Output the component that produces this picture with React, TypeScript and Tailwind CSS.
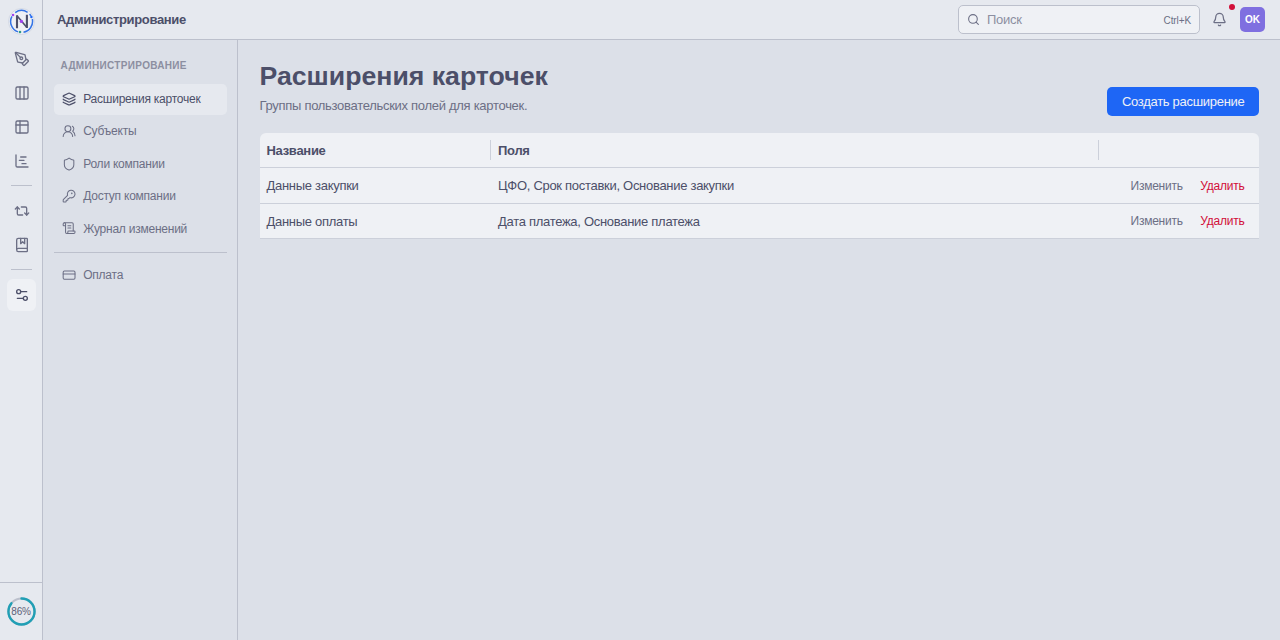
import React from 'react';
import {
  Bell,
  BookMarked,
  ChartGantt,
  Columns3,
  CreditCard,
  KeyRound,
  Layers,
  PenTool,
  Repeat2,
  ScrollText,
  Search,
  Settings2,
  Shield,
  UsersRound,
  type LucideIcon,
} from 'lucide-react';

interface IExtension {
  id: number;
  name: string;
  fields: string[];
}

interface IMenuItem {
  label: string;
  icon: LucideIcon;
  active?: boolean;
}

const extensions: IExtension[] = [
  { id: 1, name: 'Данные закупки', fields: ['ЦФО', 'Срок поставки', 'Основание закупки'] },
  { id: 2, name: 'Данные оплаты', fields: ['Дата платежа', 'Основание платежа'] },
];

const menuItems: IMenuItem[] = [
  { label: 'Расширения карточек', icon: Layers, active: true },
  { label: 'Субъекты', icon: UsersRound },
  { label: 'Роли компании', icon: Shield },
  { label: 'Доступ компании', icon: KeyRound },
  { label: 'Журнал изменений', icon: ScrollText },
];

const Logo = () => (
  <svg className="size-[27px]" viewBox="0 0 27 27" fill="none">
    <circle cx="13.5" cy="13.5" r="13" fill="#eff1f5" stroke="#cdd3e0" strokeWidth="0.8" />
    <path
      d="M7.2 4.6a11 11 0 0 1 12.4-.3M21.6 6a11 11 0 0 1 1.4 2M24.3 11a11 11 0 0 1-8.8 13.2M10 23.9A11 11 0 0 1 3.9 8.4"
      stroke="#3474e6"
      strokeWidth="1.5"
    />
    <path d="M9 20.3V7.2M18.9 20V6.8" stroke="#4c4f69" strokeWidth="2.1" />
    <path d="M9 7.8l9.9 11.6" stroke="#4c4f69" strokeWidth="1.6" />
    <circle cx="5" cy="7" r="1.3" fill="#a044ee" />
    <circle cx="23.4" cy="9" r="1.2" fill="#1e66f5" />
    <circle cx="12" cy="24" r="1.3" fill="#2f9a8a" />
    <circle cx="13.4" cy="13.4" r="1.7" fill="#a044ee" />
  </svg>
);

const TableIcon = () => (
  <svg
    className="size-4"
    viewBox="0 0 24 24"
    fill="none"
    stroke="currentColor"
    strokeWidth="2"
    strokeLinecap="round"
    strokeLinejoin="round"
  >
    <rect x="3" y="3" width="18" height="18" rx="2" />
    <path d="M3 9h18M9 3v18" />
  </svg>
);

const RailButton: React.FC<{ active?: boolean; children: React.ReactNode }> = ({ active, children }) => (
  <button
    className={`ml-[7px] flex h-8 w-[29px] items-center justify-center rounded-md ${
      active ? 'bg-[#eff1f5] text-[#4c4f69]' : 'text-[#6c6f85]'
    }`}
  >
    {children}
  </button>
);

const ProgressRing: React.FC<{ value: number }> = ({ value }) => (
  <div className="ml-[6.5px] grid size-[29px] place-items-center">
    <svg className="col-start-1 row-start-1 size-[29px] -rotate-90" viewBox="0 0 30 30" fill="none">
      <circle cx="15" cy="15" r="13.5" stroke="#bcc0cc" strokeWidth="2.2" />
      <circle
        cx="15"
        cy="15"
        r="13.5"
        stroke="#209fb5"
        strokeWidth="2.5"
        pathLength="100"
        strokeDasharray={`${value} 100`}
        strokeLinecap="round"
      />
    </svg>
    <span className="col-start-1 row-start-1 text-[10px] leading-none tracking-[-0.2px] text-[#5c5f77]">{value}%</span>
  </div>
);

const Rail = () => (
  <aside className="flex w-[43px] shrink-0 flex-col border-r border-[#bcc0cc] bg-[#e6e9ef]">
    <div className="flex h-[42.5px] items-end pb-2 pl-2">
      <Logo />
    </div>
    <nav className="flex flex-1 flex-col gap-0.5">
      <RailButton><PenTool size={16} /></RailButton>
      <RailButton><Columns3 size={16} /></RailButton>
      <RailButton><TableIcon /></RailButton>
      <RailButton><ChartGantt size={16} /></RailButton>
      <div className="my-[6.5px] mr-2.5 ml-[11px] h-px bg-[#bcc0cc]" />
      <RailButton><Repeat2 size={16} /></RailButton>
      <RailButton><BookMarked size={16} /></RailButton>
      <div className="my-[6.5px] mr-2.5 ml-[11px] h-px bg-[#bcc0cc]" />
      <RailButton active><Settings2 size={16} /></RailButton>
    </nav>
    <div className="h-[58px] border-t border-[#bcc0cc] pt-3.5">
      <ProgressRing value={86} />
    </div>
  </aside>
);

const Header = () => (
  <header className="flex h-10 shrink-0 items-center border-b border-[#bcc0cc] bg-[#e6e9ef] pr-[15px] pl-3.5">
    <h2 className="pt-px font-bold tracking-[-0.34px]">Администрирование</h2>
    <div className="ml-auto flex h-[29px] w-[242px] items-center rounded-[5px] border border-[#bcc0cc] bg-[#eff1f5] px-2">
      <Search size={13} className="text-[#6c6f85]" />
      <span className="ml-[7px] pt-px text-[#8c8fa1]">Поиск</span>
      <span className="ml-auto pt-px text-[10px] tracking-[-0.1px] text-[#6c6f85]">Ctrl+K</span>
    </div>
    <button className="relative ml-3 text-[#6c6f85]">
      <Bell size={15} />
      <span className="absolute -top-[8px] -right-[8px] size-[6px] rounded-full bg-[#d20f39]" />
    </button>
    <div className="ml-[13px] flex size-[25px] items-center justify-center rounded-[5px] bg-[#7f6fe0] text-[10px] font-bold tracking-[-0.1px] text-white">
      OK
    </div>
  </header>
);

const MenuItem: React.FC<{ item: IMenuItem }> = ({ item }) => {
  const Icon = item.icon;
  return (
    <a
      className={`flex h-[31px] items-center gap-[7px] rounded-[5px] pl-[8.5px] text-xs tracking-[-0.23px] ${
        item.active ? 'bg-[#e6e9ef] text-[#4c4f69]' : 'text-[#6c6f85]'
      }`}
    >
      <Icon size={14.2} strokeWidth={item.active ? 2 : 1.75} />
      {item.label}
    </a>
  );
};

const SideMenu = () => (
  <aside className="w-[195px] shrink-0 border-r border-[#bcc0cc] px-[10.5px] pt-[17.5px]">
    <div className="mb-[11px] pl-[7px] text-[10px] leading-[15px] font-bold tracking-[0.32px] text-[#8c8fa1]">
      АДМИНИСТРИРОВАНИЕ
    </div>
    <nav className="flex flex-col gap-[1.4px]">
      {menuItems.map(item => (
        <MenuItem key={item.label} item={item} />
      ))}
    </nav>
    <div className="mt-[7.5px] mb-[7px] h-px bg-[#bcc0cc]" />
    <MenuItem item={{ label: 'Оплата', icon: CreditCard }} />
  </aside>
);

const ExtensionsTable = () => (
  <table className="mt-[17.5px] w-full table-fixed border-separate border-spacing-0 overflow-hidden rounded-t-md bg-[#eff1f5] text-left">
    <colgroup>
      <col className="w-[231px]" />
      <col className="w-[608px]" />
      <col />
    </colgroup>
    <thead>
      <tr className="h-[35px]">
        <th className="border-b border-[#ccd0da] p-0">
          <div className="flex h-5 items-center border-r border-[#ccd0da] pt-px pl-[7px]">Название</div>
        </th>
        <th className="border-b border-[#ccd0da] p-0">
          <div className="flex h-5 items-center border-r border-[#ccd0da] pt-px pl-[7.5px]">Поля</div>
        </th>
        <th className="border-b border-[#ccd0da] p-0" />
      </tr>
    </thead>
    <tbody>
      {extensions.map(ext => (
        <tr key={ext.id} className="h-9 last:h-[35px]">
          <td className="border-b border-[#ccd0da] pt-px pr-0 pb-0 pl-[7px]">{ext.name}</td>
          <td className="border-b border-[#ccd0da] pt-px pr-0 pb-0 pl-[7.5px]">{ext.fields.join(', ')}</td>
          <td className="border-b border-[#ccd0da] p-0">
            <div className="flex justify-end gap-[17.5px] pr-[14.5px] text-xs tracking-[-0.23px]">
              <button className="text-[#6c6f85]">Изменить</button>
              <button className="text-[#d20f39]">Удалить</button>
            </div>
          </td>
        </tr>
      ))}
    </tbody>
  </table>
);

export default function App() {
  return (
    <div className="flex h-screen overflow-hidden bg-[#dce0e8] font-['Liberation_Sans',Arial,sans-serif] text-[13px] tracking-[-0.29px] text-[#4c4f69]">
      <Rail />
      <div className="flex min-w-0 flex-1 flex-col">
        <Header />
        <div className="flex min-h-0 flex-1">
          <SideMenu />
          <main className="min-w-0 flex-1 pt-5 pr-[21px] pl-[21.5px]">
            <div className="flex items-end justify-between">
              <div>
                <h1 className="text-[26.67px] leading-8 font-bold tracking-normal">Расширения карточек</h1>
                <p className="mt-[3.5px] leading-5 text-[#6c6f85]">Группы пользовательских полей для карточек.</p>
              </div>
              <button className="flex h-[28.5px] items-center rounded-[5px] bg-[#1e66f5] px-[14.5px] text-[#eff1f5]">
                Создать расширение
              </button>
            </div>
            <ExtensionsTable />
          </main>
        </div>
      </div>
    </div>
  );
}
